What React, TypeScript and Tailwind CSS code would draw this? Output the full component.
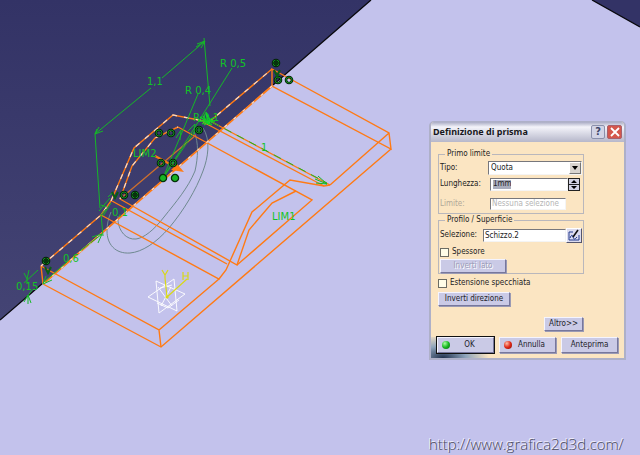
import React from 'react';

interface PushButtonProps {
  children: React.ReactNode;
  className?: string;
  led?: 'green' | 'red';
  disabled?: boolean;
}

const PushButton = ({ children, className = '', led, disabled = false }: PushButtonProps) => {
  return (
    <button
      type="button"
      disabled={disabled}
      className={`relative flex items-center justify-center border border-t-[#f4f4ff] border-l-[#f4f4ff] border-r-[#77779c] border-b-[#77779c] bg-[#cacae6] px-1 whitespace-nowrap shadow-[1px_1px_0_#9a9ab4] ${disabled ? 'text-[#9c9cb8] [text-shadow:1px_1px_0_#fff]' : 'text-[#1c1c28]'} ${className}`}
    >
      {led && (
        <span
          className={`h-2 w-2 rounded-full ${led === 'green' ? 'bg-radial-[at_35%_30%] from-[#a8ffa0] via-[#18b820] to-[#086010]' : 'bg-radial-[at_35%_30%] from-[#ffc0a8] via-[#e02818] to-[#801008]'}`}
        />
      )}
      <span className={led ? 'flex-1 text-center' : ''}>{children}</span>
    </button>
  );
};

const FIELD = 'border border-t-[#77777c] border-l-[#77777c] border-r-[#f4f4f4] border-b-[#f4f4f4] bg-white';

/* small constraint markers placed along the sketch */
const Marker = ({ x, y, kind }: { x: number; y: number; kind: 'ring' | 'dot' | 'phi' | 'solid' }) => (
  <g transform={`translate(${x} ${y})`}>
    {kind === 'solid' ? (
      <circle r="3.6" fill="#18b424" stroke="#04300a" strokeWidth="1.3" />
    ) : (
      <>
        <circle r="3" fill={kind === 'phi' ? '#127a1a' : 'none'} stroke="#04200a" strokeWidth="2.6" />
        <circle r="3" fill="none" stroke="#128c1c" strokeWidth="1" />
      </>
    )}
    {kind === 'dot' && <path d="M0-2V2" stroke="#128c1c" strokeWidth="1.4" />}
    {kind === 'phi' && <path d="M0-4V4M-4 0H4" stroke="#04200a" strokeWidth="1.2" />}
  </g>
);

const Viewport = () => {
  return (
    <svg className="absolute inset-0 h-full w-full" viewBox="0 0 640 455" preserveAspectRatio="xMinYMin slice" aria-hidden="true">
      <defs>
        <linearGradient id="sky" x1="0" y1="0" x2="0" y2="1">
          <stop offset="0" stopColor="#333366" />
          <stop offset="1" stopColor="#444474" />
        </linearGradient>
      </defs>
      <rect width="640" height="455" fill="#c3c2ec" />
      <path d="M0 0H371L0 320Z" fill="url(#sky)" />
      <path d="M592 0H640V27Z" fill="#333366" />
      <path d="M371 0L273 85M43 283L0 320M592 0L640 27" stroke="#08080c" strokeWidth="1.3" fill="none" />

      {/* sketch circles */}
      <g fill="none" stroke="#6f8990" strokeWidth="1">
        <path d="M203 128C211 140 208 158 203 171C196 190 184 210 169 228C156 243 142 252 130 253C115 254 107 244 107 231C107 225 108 219 111 212" />
        <path d="M194 132C199 142 198 158 195 171C188 188 176 202 164 217C154 230 144 238 136 239C126 240 119 231 118 221V216" />
      </g>

      {/* prism wireframe */}
      <g fill="none" stroke="#ff7a14" strokeWidth="1.4">
        <path d="M272 69L389 133L391 149L272 86ZM391 149L161 347L43 284M389 133L330 185" />
        <path d="M41 266L159 330L161 347M159 330L219 279M41 266L43 284" />
        <path d="M101 215L219 279L226 270L252 212L290 180L324 186L330 185" />
        <path d="M210 121L330 185M203 122L324 186M178 127L312 200L237 265" />
        <path d="M120 199L237 265L249 230L272 203L296 191M112 201L227 264" />
        <path d="M41 266L101 215L111 201L134 148L173 115L209 122L272 69" />
        <path d="M120 199L132 166L155 138L178 127" />
        <path d="M43 284L272 86" strokeWidth="1.8" />
        <path d="M155 156L181 170" strokeWidth="2" />
      </g>
      <path d="M120 199L196 135" stroke="#d0702c" strokeWidth="1.3" />
      <path d="M184 172L171 170L177 164Z" fill="#ff7a14" />
      <g fill="none" stroke="#f6dccb" strokeWidth="1.2" strokeDasharray="5 7">
        <path d="M43 284L272 86" strokeDasharray="3 9" />
        <path d="M41 266L101 215L111 201L134 148L173 115L209 122L272 69" />
        <path d="M120 199L132 166L155 138L178 127" />
      </g>

      {/* dimensions */}
      <g fill="none" stroke="#15b827" strokeWidth="1">
        <path d="M95 134L151 88M162 78L205 41M95 134L100 208M204 38L210 106" />
        <path d="M95 134L99 127M95 134L103 131M95 134L97 129M205 41L197 44M205 41L201 48M205 41L196 47" />
        <path d="M232 68L163 178M198 94L163 178M163 178L195 131" />
        <path d="M181 130L176 138M181 130L180 140M195 124L188 131M195 124L194 134" />
        <path d="M102 234L80 251M67 262L43 283M102 234L98 243M102 234L92 237M43 284L52 280M43 284L46 276" />
        <path d="M101 214L103 236M38 270L24 283M32 290L27 297" />
        <path d="M29 270L27 279L24 273M27 279V284M28 304V295L31 303M28 295L24 302" />
        <path d="M101 205L107 207M99 211L110 198M103 216L111 203M101 215L106 209M108 197L113 192" />
        <path d="M327 184L316 183M327 184L318 176M327 184L315 179" />
        <path d="M212 122L327 183" strokeDasharray="8 6" />
      </g>
      <path d="M200 117L212 125M202 124L215 117M203 116L209 125M206 113L212 123M198 121H215M204 125L213 120M206 112L208 123" stroke="#12d426" strokeWidth="1.4" fill="none" />

      {/* constraint markers */}
      <Marker x={159} y={133} kind="ring" />
      <Marker x={171} y={133} kind="ring" />
      <Marker x={199} y={130} kind="dot" />
      <Marker x={161} y={163} kind="ring" />
      <Marker x={173} y={163} kind="ring" />
      <Marker x={163} y={178} kind="solid" />
      <Marker x={175} y={178} kind="solid" />
      <Marker x={124} y={195} kind="ring" />
      <Marker x={135} y={195} kind="phi" />
      <Marker x={276} y={63} kind="phi" />
      <Marker x={278} y={80} kind="ring" />
      <Marker x={289} y={80} kind="ring" />
      <Marker x={46} y={261} kind="phi" />
      <g stroke="#0a5c12" strokeWidth="2" fill="none">
        <path d="M274 70L277 76L280 70M112 192L115 198L118 192M45 267L48 273L51 267" />
      </g>

      <g fill="#12c426" fontFamily="'DejaVu Sans', sans-serif" fontSize="10">
        <text x="147" y="85">1,1</text>
        <text x="220" y="67">R 0,5</text>
        <text x="185" y="94">R 0,4</text>
        <text x="193" y="121">R 0,1</text>
        <text x="133" y="157">LIM2</text>
        <text x="272" y="220">LIM1</text>
        <text x="261" y="151">1</text>
        <text x="112" y="216">0,1</text>
        <text x="63" y="262">0,6</text>
        <text x="16" y="290">0,15</text>
      </g>

      {/* axis system */}
      <g fill="none" stroke="#ffffff" strokeWidth="0.9">
        <path d="M156 281L185 294L159 313Z" />
        <path d="M148 297L174 279L177 311Z" />
        <path d="M158 287L172 306M171 287L161 306M157 303L168 308L179 300M160 288L172 285" />
      </g>
      <g fill="none" stroke="#d8d818" strokeWidth="1.2">
        <path d="M167 297L165 278M167 297L187 279M162 270L165 275L168 270M165 275V278M183 272V280M188 272V280M183 276H188" />
      </g>
      <circle cx="167" cy="297" r="1.6" fill="#d8d818" />
    </svg>
  );
};

const PrismDialog = () => {
  return (
    <section
      role="dialog"
      aria-labelledby="dialog-title"
      className="absolute top-[121px] right-[14px] w-[197px] overflow-hidden rounded-t-[5px] border-2 border-t border-[#aeb0c8] bg-[#fbe5c2] font-['DejaVu_Sans_Condensed','DejaVu_Sans',sans-serif] text-[8px] leading-[10px] text-[#222]"
    >
      <header className="flex h-5 items-center gap-[2px] bg-linear-to-b from-[#a9abc4] via-[#f4f4fa] via-25% to-[#b6b7ca] pr-[2px] pl-[2px]">
        <h1 id="dialog-title" className="flex-1 font-['Noto_Sans','Open_Sans',sans-serif] text-[9px] font-bold text-[#181820]">Definizione di prisma</h1>
        <button type="button" aria-label="Guida" className="flex h-[14px] w-[14px] items-center justify-center rounded-[2px] border border-[#8b90ac] bg-[#d2d4e6] text-[11px] font-bold text-[#3d4468]">?</button>
        <button type="button" aria-label="Chiudi" className="flex h-[14px] w-[15px] items-center justify-center rounded-[2px] border border-[#a8606c] bg-[#d4574c]">
          <svg viewBox="0 0 10 10" className="h-[10px] w-[10px]"><path d="M1 1L9 9M9 1L1 9" stroke="#fff" strokeWidth="1.8" /></svg>
        </button>
      </header>

      <form className="flex flex-col items-start px-[7px] pt-[7px] pb-[6px]" onSubmit={(e) => e.preventDefault()}>
        <fieldset className="w-[146px] min-w-0 border border-[#b9b7bc] pt-[1px] pr-[1px] pb-[2px] pl-[1px]">
          <legend className="ml-[5px] px-[2px]">Primo limite</legend>
          <div className="flex h-4 items-center">
            <label htmlFor="tipo" className="w-[48px]">Tipo:</label>
            <div className="relative flex-1">
              <select id="tipo" className={`block h-[14px] w-full appearance-none pl-[2px] ${FIELD}`}>
                <option>Quota</option>
              </select>
              <span className="pointer-events-none absolute top-[1px] right-[1px] flex h-3 w-3 items-center justify-center border border-t-white border-l-white border-r-[#777] border-b-[#777] bg-[#d8d4d0]">
                <svg viewBox="0 0 6 4" className="h-1 w-[6px]"><path d="M0 0H6L3 4Z" fill="#000" /></svg>
              </span>
            </div>
          </div>
          <div className="flex h-4 items-center pr-[2px]">
            <label htmlFor="lunghezza" className="w-[50px]">Lunghezza:</label>
            <div className={`flex h-[13px] min-w-0 flex-1 items-center ${FIELD}`}>
              <input id="lunghezza" defaultValue="1mm" className="ml-[2px] h-[9px] w-[18px] bg-[#a9adbc] outline-none" />
            </div>
            <button type="button" aria-label="Modifica valore" className="h-[13px] w-3 border border-[#222] bg-[#d4d4e4]">
              <svg viewBox="0 0 10 11" className="h-[11px] w-[10px]"><path d="M5 1L8 4H2ZM5 10L8 7H2Z" fill="#000" /><path d="M0 5.5H10" stroke="#222" /></svg>
            </button>
          </div>
          <div className="mt-1 flex h-[15px] items-center pr-4 text-[#b0a898]">
            <label htmlFor="limite" className="w-[50px]">Limite:</label>
            <input id="limite" disabled defaultValue="Nessuna selezione" className={`h-3 min-w-0 flex-1 pl-[1px] ${FIELD} text-[#b4b4b4]`} />
          </div>
        </fieldset>

        <fieldset className="mt-[1px] w-[146px] min-w-0 border border-[#b9b7bc] pt-[1px] pr-[1px] pl-[1px]">
          <legend className="ml-[5px] px-[2px]">Profilo / Superficie</legend>
          <div className="mt-[1px] flex h-4 items-center">
            <label htmlFor="selezione" className="w-[43px]">Selezione:</label>
            <input id="selezione" defaultValue="Schizzo.2" className={`h-[13px] min-w-0 flex-1 pl-[1px] ${FIELD}`} />
            <button type="button" aria-label="Schizzo" className="flex h-[15px] w-4 shrink-0 items-center justify-center border border-t-white border-l-white border-r-[#55556c] border-b-[#55556c] bg-[#dcdcf0]">
              <svg viewBox="0 0 12 12" className="h-3 w-3 shrink-0" fill="none"><path d="M5 3H1V11H11V6" stroke="#223a8c" /><path d="M2 9Q4 4 5 8T9 8" stroke="#223a8c" /><path d="M10 1L5 8" stroke="#111" strokeWidth="1.6" /></svg>
            </button>
          </div>
          <label className="mt-[3px] flex h-3 items-center gap-[3px]">
            <input type="checkbox" className="h-[9px] w-[9px] appearance-none border border-[#6c6c64] bg-[#fffde8]" />
            Spessore
          </label>
          <PushButton disabled className="mt-[1px] h-[14px] w-[66px]">Inverti lato</PushButton>
        </fieldset>

        <label className="mt-[3px] flex h-3 items-center gap-[3px]">
          <input type="checkbox" className="h-[9px] w-[9px] appearance-none border border-[#6c6c64] bg-[#fffde8]" />
          Estensione specchiata
        </label>
        <PushButton className="mt-[3px] h-[14px] w-[72px]">Inverti direzione</PushButton>
        <PushButton className="mt-[11px] ml-[106px] h-[14px] w-[39px]">Altro&gt;&gt;</PushButton>
      </form>

      <footer className="flex gap-[5px] bg-radial-[46px_24px_at_12px_100%] from-[#20304c] via-[#8ea4bc] via-50% to-[#fbe5c2] px-[6px] pb-[5px]">
        <PushButton led="green" className="h-4 flex-1 outline outline-[#111]">OK</PushButton>
        <PushButton led="red" className="h-4 flex-1">Annulla</PushButton>
        <PushButton className="h-4 flex-1">Anteprima</PushButton>
      </footer>
    </section>
  );
};

const App = () => {
  return (
    <main className="relative min-h-screen overflow-hidden bg-[#c3c2ec]">
      <Viewport />
      <PrismDialog />
      <a
        href="http://www.grafica2d3d.com/"
        className="absolute right-4 bottom-[1px] font-['Open_Sans','Noto_Sans',sans-serif] text-[15px] leading-5 font-light text-[#4c4c5c] [text-shadow:-1px_-1px_0_#f4f4ff]"
      >
        http://www.grafica2d3d.com/
      </a>
    </main>
  );
};

export default App;
